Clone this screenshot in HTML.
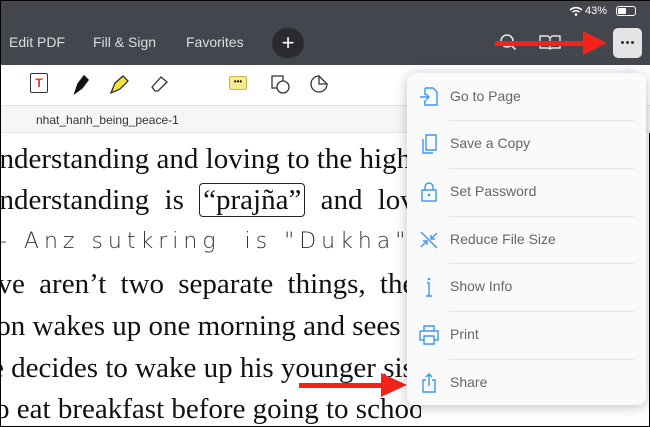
<!DOCTYPE html>
<html><head><meta charset="utf-8"><style>
*{margin:0;padding:0;box-sizing:border-box}
body{width:650px;height:427px;overflow:hidden;position:relative;background:#fff;font-family:"Liberation Sans",sans-serif;border:1px solid #000}
.top{position:absolute;left:0;top:0;width:650px;height:64px;background:#43464d;color:#e6e6e8}
.nav{position:absolute;top:33px;font-size:14px;color:#dcdde0}
.tb{position:absolute;left:0;top:64px;width:650px;height:41px;background:#fff;border-bottom:1px solid #e2e2e2}
.fn{position:absolute;left:0;top:105px;width:650px;height:27px;background:#f6f6f6;border-bottom:1px solid #e6e6e6;font-size:12px;color:#333}
.page{position:absolute;left:0;top:132px;width:420px;height:294px;overflow:hidden}
.doc{position:absolute;font-family:"Liberation Serif",serif;font-size:29px;color:#111;white-space:nowrap;line-height:30px}
.menu{position:absolute;left:406px;top:72px;width:239px;height:332px;background:#fafafa;border-radius:8px;box-shadow:0 2px 12px rgba(0,0,0,.25)}
.it{position:absolute;left:0;width:239px;height:48px}
.it span{position:absolute;left:43px;top:15px;font-size:14px;color:#666}
.it svg{position:absolute;left:10px;top:12px}
.sep{position:absolute;left:42px;right:12px;height:1px;background:#e4e4e4}
</style></head><body>
<div class="top">
  <div style="position:absolute;right:44px;top:4px;font-size:11px;color:#fff">43%</div>
  <svg style="position:absolute;left:568px;top:5px" width="14" height="10" viewBox="0 0 14 10"><path d="M1 4a9 9 0 0 1 12 0M3.5 6a5.5 5.5 0 0 1 7 0" stroke="#fff" stroke-width="1.6" fill="none"/><circle cx="7" cy="8.5" r="1.3" fill="#fff"/></svg>
  <div style="position:absolute;left:615px;top:5px;width:20px;height:10px;border:1px solid #fff;border-radius:3px"><div style="width:8px;height:6px;margin:1px;background:#fff;border-radius:1px"></div></div>
  <div class="nav" style="left:8px">Edit PDF</div>
  <div class="nav" style="left:92px">Fill &amp; Sign</div>
  <div class="nav" style="left:185px">Favorites</div>
  <div style="position:absolute;left:271px;top:27px;width:32px;height:30px;border-radius:15px;background:#2a2b2f;color:#fff;font-size:22px;text-align:center;line-height:29px">+</div>
  <svg style="position:absolute;left:498px;top:32px" width="18" height="18"><circle cx="8" cy="8" r="6" stroke="#e6e6e8" stroke-width="1.6" fill="none"/><path d="M12.5 12.5l4 4" stroke="#e6e6e8" stroke-width="1.6"/></svg>
  <svg style="position:absolute;left:538px;top:33px" width="22" height="16"><path d="M1 2h8l2 2 2-2h8v12h-8l-2 1-2-1H1z M11 4v11" stroke="#e6e6e8" stroke-width="1.4" fill="none"/></svg>
  <div style="position:absolute;left:494px;top:40px;width:90px;height:5px;background:#f2231a"></div>
  <div style="position:absolute;left:582px;top:30px;width:0;height:0;border-top:12px solid transparent;border-bottom:12px solid transparent;border-left:24px solid #f2231a"></div>
  <div style="position:absolute;left:612px;top:27px;width:29px;height:30px;background:#e4e4e6;border-radius:5px"><div style="position:absolute;top:13px;left:8px;width:3px;height:3px;border-radius:2px;background:#333;box-shadow:5px 0 #333,10px 0 #333"></div></div>
</div>
<div class="tb">
  <div style="position:absolute;left:29px;top:8px;width:18px;height:20px;border:1px solid #333;border-radius:2px;color:#e8331d;font-size:12px;font-weight:bold;text-align:center;line-height:18px">T</div>
  <svg style="position:absolute;left:70px;top:8px" width="20" height="22"><path d="M4 20l3-9 6-8 4 4-6 8z" stroke="#111" stroke-width="1.5" fill="#111"/></svg>
  <svg style="position:absolute;left:108px;top:8px" width="22" height="22"><path d="M2 20l4-10 8-7 5 5-8 8z" stroke="#222" stroke-width="1.2" fill="#f3e23a"/></svg>
  <svg style="position:absolute;left:148px;top:9px" width="22" height="18"><path d="M3 13l9-10 6 5-9 9H6z" stroke="#333" stroke-width="1.3" fill="#fff"/></svg>
  <div style="position:absolute;left:228px;top:11px;width:18px;height:14px;background:#f6ec8f;border:1px solid #c8b84a;border-radius:2px;font-size:8px;text-align:center;line-height:10px">•••</div>
  <svg style="position:absolute;left:268px;top:8px" width="22" height="22"><rect x="3" y="3" width="11" height="12" stroke="#333" stroke-width="1.3" fill="none"/><circle cx="14" cy="14" r="6" stroke="#333" stroke-width="1.3" fill="#fff"/></svg>
  <svg style="position:absolute;left:308px;top:8px" width="22" height="22"><path d="M10 3a8 8 0 1 0 8 8h-8z" stroke="#333" stroke-width="1.3" fill="none"/><path d="M10 3l8 8" stroke="#333" stroke-width="1.3"/></svg>
</div>
<div class="fn"><div style="position:absolute;left:35px;top:7px">nhat_hanh_being_peace-1</div></div>
<div class="page">
<div class="doc" style="left:-16px;top:11px">understanding and loving to the highest</div>
<div class="doc" style="left:-16px;top:52px;word-spacing:8px">understanding is <span style="border:1.5px solid #222;border-radius:4px;padding:0 3px">“prajña”</span> and love</div>
<div class="doc" style="left:-2px;top:94px;font-family:'DejaVu Sans',sans-serif;font-size:22px;font-weight:200;letter-spacing:5px;color:#333">- Anz sutkring &nbsp;is "Dukha" bu</div>
<div class="doc" style="left:-26px;top:136px;word-spacing:7px">love aren’t two separate things, the</div>
<div class="doc" style="left:-16px;top:178px">son wakes up one morning and sees the</div>
<div class="doc" style="left:-10px;top:220px">e decides to wake up his younger sister</div>
<div class="doc" style="left:-14px;top:261px">to eat breakfast before going to school.</div>
</div>
<div style="position:absolute;left:298px;top:382px;width:86px;height:5px;background:#f2231a"></div>
<div style="position:absolute;left:380px;top:372px;border-top:12px solid transparent;border-bottom:12px solid transparent;border-left:26px solid #f2231a"></div>
<div style="position:absolute;left:620px;top:64px;width:0;height:0;border-left:8px solid transparent;border-right:8px solid transparent;border-bottom:9px solid #fafafa"></div>
<div class="menu">
  <div class="it" style="top:0"><svg width="24" height="24"><path d="M8 3h8l4 4v13H8v-5M8 10V3M3 12h9m-3-3l3 3-3 3" stroke="#3a98f0" stroke-width="1.4" fill="none"/></svg><span>Go to Page</span></div>
  <div class="sep" style="top:47px"></div>
  <div class="it" style="top:47px"><svg width="24" height="24"><path d="M9 3h10v15H9zM6 7v14h10" stroke="#3a98f0" stroke-width="1.4" fill="none"/></svg><span>Save a Copy</span></div>
  <div class="sep" style="top:95px"></div>
  <div class="it" style="top:95px"><svg width="24" height="24"><rect x="5" y="10" width="14" height="11" stroke="#3a98f0" stroke-width="1.4" fill="none"/><path d="M8 10V7a4 4 0 0 1 8 0v3" stroke="#3a98f0" stroke-width="1.4" fill="none"/><circle cx="12" cy="15" r="1.3" fill="#3a98f0"/></svg><span>Set Password</span></div>
  <div class="sep" style="top:143px"></div>
  <div class="it" style="top:143px"><svg width="24" height="24"><path d="M4 4l16 16M20 5l-6 6m0-4v4h4M4 19l6-6m0 4v-4H6" stroke="#3a98f0" stroke-width="1.4" fill="none"/></svg><span>Reduce File Size</span></div>
  <div class="sep" style="top:190px"></div>
  <div class="it" style="top:190px"><svg width="24" height="24"><circle cx="12" cy="4" r="1.3" fill="#3a98f0"/><path d="M10 8h2v13M9 21h6" stroke="#3a98f0" stroke-width="1.4" fill="none"/></svg><span>Show Info</span></div>
  <div class="sep" style="top:238px"></div>
  <div class="it" style="top:238px"><svg width="24" height="24"><path d="M7 8V3h10v5M3 8h18v9h-4M7 17H3V8M7 13h10v8H7z" stroke="#3a98f0" stroke-width="1.4" fill="none"/></svg><span>Print</span></div>
  <div class="sep" style="top:286px"></div>
  <div class="it" style="top:286px"><svg width="24" height="24"><path d="M9 9H6v12h12V9h-3M12 15V3m-3 3l3-3 3 3" stroke="#3a98f0" stroke-width="1.4" fill="none"/></svg><span>Share</span></div>
</div>
</body></html>
